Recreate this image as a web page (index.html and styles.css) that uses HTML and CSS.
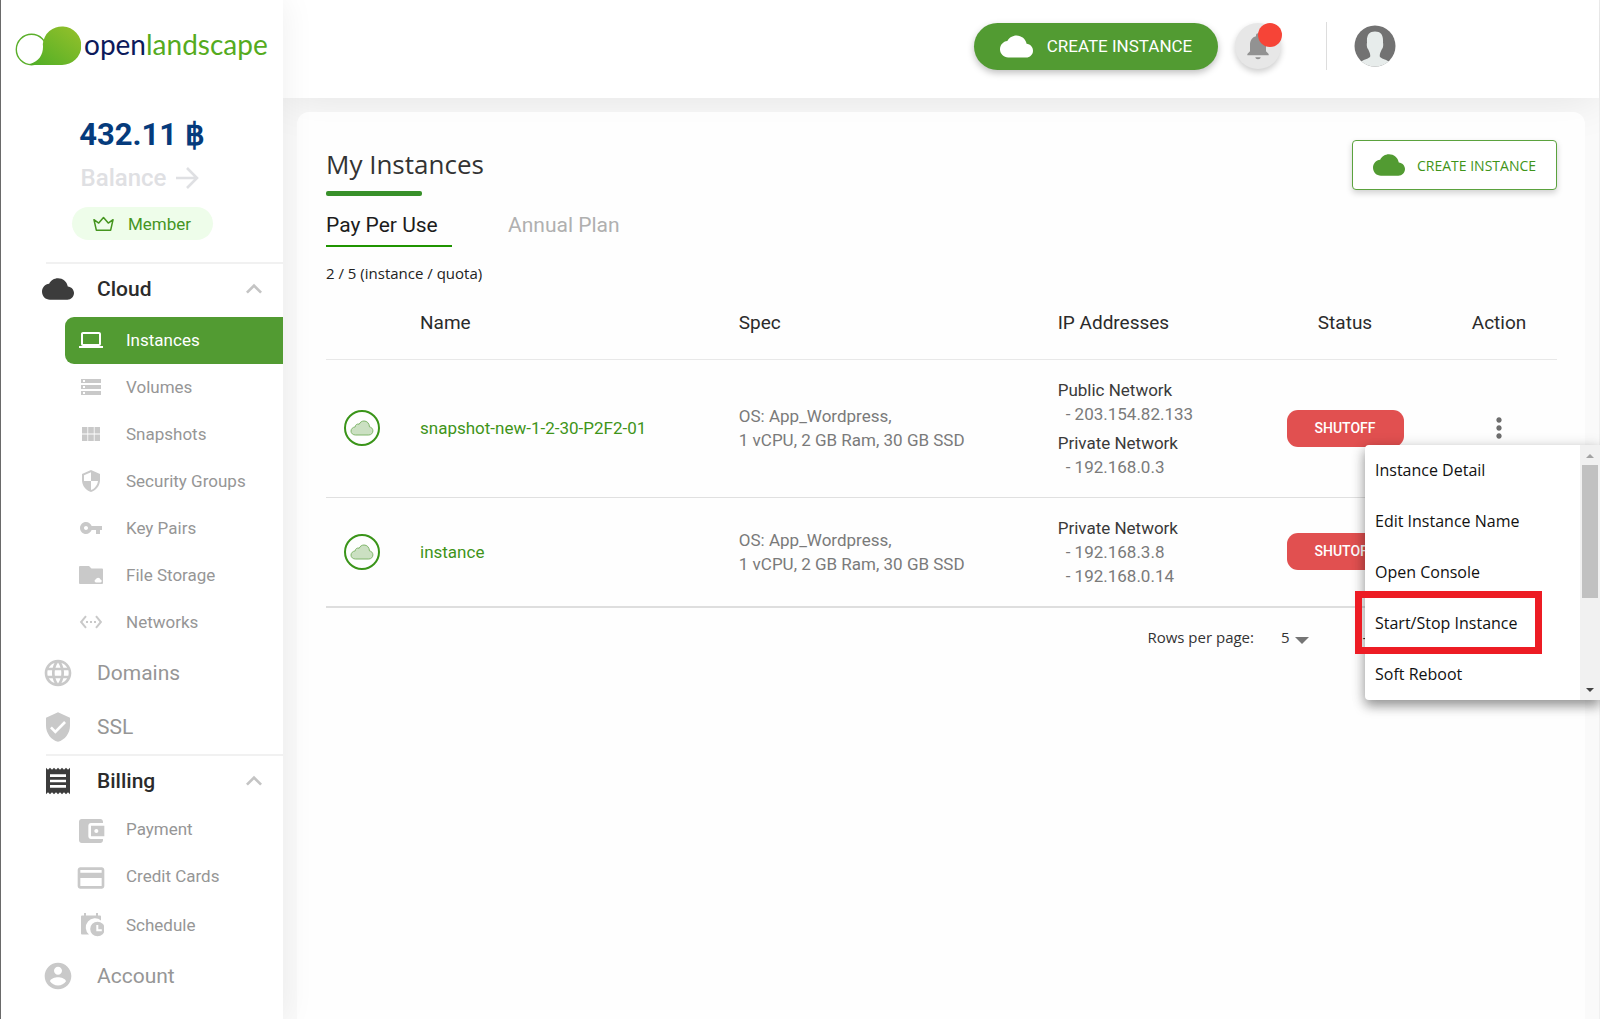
FILE: index.html
```html
<!DOCTYPE html>
<html lang="en">
<head>
<meta charset="utf-8">
<meta name="viewport" content="width=device-width, initial-scale=1">
<title>My Instances - OpenLandscape</title>
<link rel="stylesheet" href="styles.css">
</head>
<body>
<svg class="sprite" aria-hidden="true">
  <symbol id="i-cloud" viewBox="0 4 24 16"><path d="M19.35 10.04C18.67 6.59 15.64 4 12 4 9.11 4 6.6 5.64 5.35 8.04 2.34 8.36 0 10.91 0 14c0 3.31 2.69 6 6 6h13c2.76 0 5-2.24 5-5 0-2.64-2.05-4.78-4.65-4.96z"/></symbol>
  <symbol id="i-up" viewBox="0 0 24 24"><path d="M12 8l-6 6 1.41 1.41L12 10.83l4.59 4.58L18 14z"/></symbol>
  <symbol id="i-cloud-line" viewBox="0 0 24 16"><path d="M5.5 15h13.2c2.5 0 4.2-1.900 4.200-4.200 0-2.200-1.600-3.600-3.400-3.900C19.300 3.300 17 1 14.100 1c-2.300 0-4 1.200-4.900 3.200C7 3.500 5.200 5 5.200 6.900 2.800 7.200 1 8.900 1 11.100 1 13.400 3 15 5.500 15z"/></symbol>
</svg>

<div class="app">
  <aside class="sidebar">
    <a class="logo" href="#" aria-label="openlandscape">
      <svg class="logo-mark" width="66" height="42" viewBox="0 0 66 42" aria-hidden="true">
        <defs><linearGradient id="lg" x1="0" y1="1" x2="1" y2="0"><stop offset="0" stop-color="#4fae26"/><stop offset="1" stop-color="#97c12b"/></linearGradient></defs>
        <circle cx="16.500" cy="24.500" r="15.200" fill="none" stroke="#5aaf2a" stroke-width="1.400"/>
        <path d="M15 40H47A19.300 19.300 0 1 0 27.800 19C29 28 25 36 15 39z" fill="url(#lg)"/>
      </svg>
      <span class="logo-text"><span class="logo-open">open</span>landscape</span>
    </a>

    <section class="wallet">
      <strong class="amount">432.11 ฿</strong>
      <a class="balance" href="#">Balance
        <svg width="24" height="24" viewBox="0 0 24 24" fill="none" stroke="currentColor" stroke-width="2.600" aria-hidden="true"><path d="M1 12H21.500M12 2L22 12 12 22"/></svg>
      </a>
      <span class="member">
        <svg width="21" height="16" viewBox="0 0 22 16" fill="none" stroke="currentColor" stroke-width="1.600" stroke-linejoin="round" aria-hidden="true"><path d="M1 3.500L6 7 11 1.200 16 7 21 3.500 18.500 14.500H3.500z"/></svg>
        Member
      </span>
    </section>

    <nav class="nav">
      <button class="group open" type="button" aria-expanded="true">
        <span class="ico"><svg width="32" height="22"><use href="#i-cloud"/></svg></span>Cloud
        <svg class="chev" width="32" height="32"><use href="#i-up"/></svg>
      </button>
      <a class="sub active" href="#"><span class="ico"><svg width="24" height="24" viewBox="0 0 24 24"><path d="M20 18c1.100 0 1.990-.9 1.990-2L22 6c0-1.100-.9-2-2-2H4c-1.100 0-2 .9-2 2v10c0 1.100.9 2 2 2H0v2h24v-2h-4zM4 6h16v10H4V6z"/></svg></span>Instances</a>
      <a class="sub" href="#"><span class="ico"><svg width="24" height="24" viewBox="0 0 24 24"><path d="M2 20h20v-4H2v4zm2-3h2v2H4v-2zM2 4v4h20V4H2zm4 3H4V5h2v2zm-4 7h20v-4H2v4zm2-3h2v2H4v-2z"/></svg></span>Volumes</a>
      <a class="sub" href="#"><span class="ico"><svg width="24" height="24" viewBox="0 0 24 24"><path d="M3 5h5.400v6.500H3zM9.200 5h5.600v6.500H9.200zM15.600 5H21v6.500h-5.400zM3 12.500h5.400V19H3zM9.200 12.500h5.600V19H9.200zM15.600 12.500H21V19h-5.400z"/></svg></span>Snapshots</a>
      <a class="sub" href="#"><span class="ico"><svg width="24" height="24" viewBox="0 0 24 24"><path d="M12 1L3 5v6c0 5.550 3.840 10.740 9 12 5.160-1.260 9-6.450 9-12V5l-9-4zm0 10.990h7c-.53 4.120-3.280 7.790-7 8.940V12H5V6.300l7-3.110v8.800z"/></svg></span>Security Groups</a>
      <a class="sub" href="#"><span class="ico"><svg width="24" height="24" viewBox="0 0 24 24"><path d="M12.650 10C11.830 7.670 9.610 6 7 6c-3.310 0-6 2.690-6 6s2.690 6 6 6c2.610 0 4.830-1.670 5.650-4H17v4h4v-4h2v-4H12.650zM7 14c-1.100 0-2-.9-2-2s.9-2 2-2 2 .9 2 2-.9 2-2 2z"/></svg></span>Key Pairs</a>
      <a class="sub" href="#"><span class="ico"><svg width="24" height="20" viewBox="0 0 24 20" fill-rule="evenodd"><path d="M1 1h9l2.500 2.500H23a1 1 0 0 1 1 1V18a1 1 0 0 1-1 1H1a1 1 0 0 1-1-1V2a1 1 0 0 1 1-1zM17 17.500h4.500a1.600 1.600 0 0 0 0-3.100 2.500 2.500 0 0 0-4.700-.2A1.700 1.700 0 0 0 17 17.500z"/></svg></span>File Storage</a>
      <a class="sub" href="#"><span class="ico"><svg width="24" height="24" viewBox="0 0 24 24"><path d="M7.770 6.760L6.230 5.480.82 12l5.410 6.520 1.540-1.280L3.420 12l4.350-5.240zM7 13h2v-2H7v2zm10-2h-2v2h2v-2zm-6 2h2v-2h-2v2zm6.770-7.520l-1.540 1.280L20.580 12l-4.350 5.240 1.540 1.280L23.180 12l-5.410-6.520z"/></svg></span>Networks</a>
      <a class="group" href="#"><span class="ico"><svg width="32" height="32" viewBox="0 0 24 24"><path d="M11.990 2C6.470 2 2 6.480 2 12s4.470 10 9.990 10C17.520 22 22 17.520 22 12S17.520 2 11.990 2zm6.930 6h-2.950c-.32-1.250-.78-2.450-1.380-3.560 1.840.63 3.370 1.910 4.330 3.560zM12 4.040c.83 1.200 1.480 2.530 1.910 3.960h-3.820c.43-1.430 1.080-2.760 1.910-3.960zM4.260 14C4.100 13.360 4 12.690 4 12s.1-1.360.26-2h3.380c-.08.660-.14 1.320-.14 2 0 .680.060 1.340.14 2H4.260zm.82 2h2.950c.32 1.250.78 2.450 1.380 3.560-1.840-.63-3.370-1.900-4.330-3.560zm2.950-8H5.080c.96-1.660 2.490-2.930 4.330-3.560C8.810 5.550 8.350 6.750 8.030 8zM12 19.960c-.83-1.200-1.480-2.530-1.910-3.960h3.820c-.43 1.430-1.080 2.760-1.910 3.960zM14.340 14H9.660c-.09-.66-.16-1.320-.16-2 0-.68.070-1.350.16-2h4.680c.09.650.16 1.320.16 2 0 .680-.07 1.340-.16 2zm.25 5.560c.6-1.110 1.060-2.310 1.380-3.560h2.950c-.96 1.650-2.490 2.930-4.330 3.560zM16.360 14c.08-.66.14-1.320.14-2 0-.68-.06-1.340-.14-2h3.380c.16.640.26 1.310.26 2s-.1 1.360-.26 2h-3.380z"/></svg></span>Domains</a>
      <a class="group" href="#"><span class="ico"><svg width="32" height="32" viewBox="0 0 24 24"><path d="M12 1L3 5v6c0 5.550 3.840 10.740 9 12 5.160-1.260 9-6.450 9-12V5l-9-4zm-2 16l-4-4 1.410-1.410L10 14.170l6.590-6.590L18 9l-8 8z"/></svg></span>SSL</a>
    </nav>
    <nav class="nav">
      <button class="group open" type="button" aria-expanded="true">
        <span class="ico"><svg width="32" height="32" viewBox="0 0 24 24"><path d="M18 17H6v-2h12v2zm0-4H6v-2h12v2zm0-4H6V7h12v2zM3 22l1.500-1.500L6 22l1.500-1.500L9 22l1.500-1.500L12 22l1.500-1.500L15 22l1.500-1.500L18 22l1.500-1.500L21 22V2l-1.500 1.500L18 2l-1.500 1.500L15 2l-1.500 1.500L12 2l-1.500 1.500L9 2 7.500 3.500 6 2 4.500 3.500 3 2v20z"/></svg></span>Billing
        <svg class="chev" width="32" height="32"><use href="#i-up"/></svg>
      </button>
      <a class="sub" href="#"><span class="ico low"><svg width="32" height="32" viewBox="0 0 24 24"><path d="M21 18v1c0 1.100-.9 2-2 2H5c-1.110 0-2-.9-2-2V5c0-1.100.89-2 2-2h14c1.100 0 2 .9 2 2v1h-9c-1.110 0-2 .9-2 2v8c0 1.100.89 2 2 2h9zm-9-2h10V8H12v8zm4-2.500c-.83 0-1.500-.67-1.500-1.500s.67-1.500 1.500-1.500 1.500.67 1.500 1.500-.67 1.500-1.500 1.500z"/></svg></span>Payment</a>
      <a class="sub" href="#"><span class="ico low"><svg width="32" height="32" viewBox="0 0 24 24"><path d="M20 4H4c-1.110 0-1.990.89-1.990 2L2 18c0 1.110.89 2 2 2h16c1.110 0 2-.89 2-2V6c0-1.110-.89-2-2-2zm0 14H4v-6h16v6zm0-10H4V6h16v2z"/></svg></span>Credit Cards</a>
      <a class="sub apart" href="#"><span class="ico"><svg width="26" height="24" viewBox="0 0 26 24"><path d="M4 2.500h2V0h2v2.500h10V0h2v2.500h2a1 1 0 0 1 1 1V7.500A9 9 0 0 0 11 21.500H4a1 1 0 0 1-1-1v-17a1 1 0 0 1 1-1z"/><path fill-rule="evenodd" d="M19.500 8.700a7.300 7.300 0 1 0 0 14.600 7.300 7.300 0 0 0 0-14.600zm-1.200 3.300h2v4.200h3.500v2h-5.500z"/></svg></span>Schedule</a>
      <a class="group" href="#"><span class="ico"><svg width="32" height="32" viewBox="0 0 24 24"><path d="M12 2C6.480 2 2 6.480 2 12s4.480 10 10 10 10-4.480 10-10S17.520 2 12 2zm0 3c1.660 0 3 1.340 3 3s-1.340 3-3 3-3-1.340-3-3 1.340-3 3-3zm0 14.200c-2.500 0-4.710-1.280-6-3.220.03-1.990 4-3.080 6-3.080 1.990 0 5.970 1.090 6 3.080-1.290 1.940-3.500 3.220-6 3.220z"/></svg></span>Account</a>
    </nav>
  </aside>

  <div class="page">
    <header class="topbar">
      <button class="create-pill" type="button"><svg width="33" height="23" aria-hidden="true"><use href="#i-cloud"/></svg>CREATE INSTANCE</button>
      <button class="bell" type="button" aria-label="Notifications">
        <svg width="32" height="32" viewBox="0 0 24 24" aria-hidden="true"><path d="M12 22c1.100 0 2-.5 2-1.500h-4c0 1 .9 1.500 2 1.500zm6-6v-5c0-3.070-1.640-5.640-4.500-6.320V4c0-.83-.67-1.500-1.500-1.500s-1.500.67-1.500 1.500v.68C7.630 5.360 6 7.920 6 11v5l-2 2v1h16v-1l-2-2z"/></svg>
        <span class="dot"></span>
      </button>
      <a class="user" href="#" aria-label="Profile">
        <svg width="42" height="42" viewBox="0 0 42 42" aria-hidden="true">
          <circle cx="21" cy="21" r="20.500" fill="#727272"/>
          <path d="M7.500 36.400C10 34.500 15.500 33.500 16.200 31.500 16.500 29.500 15.500 27 14.300 24.500 12.800 23 12.500 20 13 17.500 12.500 10 15 6.500 21 6.500S29.500 10 29 17.500C29.500 20 29.200 23 27.700 24.500 26.500 27 25.500 29.500 25.800 31.500 26.500 33.500 32 34.500 34.500 36.400A20.500 20.500 0 0 1 7.500 36.400z" fill="#e7eceb"/>
        </svg>
      </a>
    </header>

    <main class="card">
      <div class="card-head">
        <h1>My Instances</h1>
        <button class="create-box" type="button"><svg width="32" height="22" aria-hidden="true"><use href="#i-cloud"/></svg>CREATE INSTANCE</button>
      </div>
      <div class="tabs" role="tablist">
        <button class="tab selected" type="button" role="tab" aria-selected="true">Pay Per Use</button>
        <button class="tab" type="button" role="tab" aria-selected="false">Annual Plan</button>
      </div>
      <p class="quota">2 / 5 (instance / quota)</p>

      <table class="instances">
        <colgroup><col class="c-icon"><col class="c-text"><col class="c-text"><col><col class="c-status"><col class="c-action"></colgroup>
        <thead>
          <tr><th></th><th>Name</th><th>Spec</th><th>IP Addresses</th><th class="mid">Status</th><th class="mid">Action</th></tr>
        </thead>
        <tbody>
          <tr>
            <td><span class="badge"><svg width="24" height="16"><use href="#i-cloud-line"/></svg></span></td>
            <td><a href="#">snapshot-new-1-2-30-P2F2-01</a></td>
            <td>OS: App_Wordpress,<br>1 vCPU, 2 GB Ram, 30 GB SSD</td>
            <td>
              <dl><dt>Public Network</dt><dd>- 203.154.82.133</dd></dl>
              <dl><dt>Private Network</dt><dd>- 192.168.0.3</dd></dl>
            </td>
            <td class="mid"><span class="status">SHUTOFF</span></td>
            <td class="mid">
              <div class="actions">
                <button class="kebab" type="button" aria-label="Actions" aria-haspopup="menu">
                  <svg width="32" height="32" viewBox="0 0 24 24"><path d="M12 8c1.100 0 2-.9 2-2s-.9-2-2-2-2 .9-2 2 .9 2 2 2zm0 2c-1.100 0-2 .9-2 2s.9 2 2 2 2-.9 2-2-.9-2-2-2zm0 6c-1.100 0-2 .9-2 2s.9 2 2 2 2-.9 2-2-.9-2-2-2z"/></svg>
                </button>
                <div class="menu">
                  <div class="menu-items" role="menu">
                    <button type="button" role="menuitem">Instance Detail</button>
                    <button type="button" role="menuitem">Edit Instance Name</button>
                    <button type="button" role="menuitem">Open Console</button>
                    <button class="marked" type="button" role="menuitem">Start/Stop Instance</button>
                    <button type="button" role="menuitem">Soft Reboot</button>
                  </div>
                  <div class="scroll" aria-hidden="true">
                    <span class="arrow up"></span><span class="thumb"></span><span class="arrow down"></span>
                  </div>
                </div>
              </div>
            </td>
          </tr>
          <tr>
            <td><span class="badge"><svg width="24" height="16"><use href="#i-cloud-line"/></svg></span></td>
            <td><a href="#">instance</a></td>
            <td>OS: App_Wordpress,<br>1 vCPU, 2 GB Ram, 30 GB SSD</td>
            <td>
              <dl><dt>Private Network</dt><dd>- 192.168.3.8</dd><dd>- 192.168.0.14</dd></dl>
            </td>
            <td class="mid"><span class="status">SHUTOFF</span></td>
            <td></td>
          </tr>
        </tbody>
      </table>

      <div class="pager">
        <label for="rows">Rows per page:</label>
        <span class="picker"><select id="rows"><option>5</option></select></span>
        <span class="range">1-2 of 2</span>
      </div>
    </main>
  </div>
</div>
</body>
</html>
```

FILE: styles.css
```css
:root {
  --green: #529b32;
  --green-text: #3f9419;
  --grey-text: #969696;
  --grey-icon: #c9c9c9;
  --ui: Roboto, "Liberation Sans", sans-serif;
  --brand: "Open Sans", "Noto Sans", sans-serif;
}

*, *::before, *::after { box-sizing: border-box; }

body {
  margin: 0;
  font-family: var(--ui);
  color: #333;
  background: #fafafa;
}

button {
  font: inherit;
  color: inherit;
  background: none;
  border: 0;
  padding: 0;
  cursor: pointer;
}

a { color: inherit; text-decoration: none; }
svg { display: block; fill: currentColor; flex: none; }
svg[fill="none"] { fill: none; }
.sprite { position: absolute; width: 0; height: 0; }

.app { display: flex; min-height: 100vh; }

/* Sidebar */
.sidebar {
  position: relative;
  z-index: 1;
  flex: none;
  width: 283px;
  background: #fff;
  border-left: 1px solid #6a6a6a;
  box-shadow: 0 0 32px rgba(0, 0, 0, .07);
}

.logo {
  display: flex;
  align-items: center;
  gap: 3px;
  height: 98px;
  padding: 0 0 6px 14px;
}
.logo-text { padding-bottom: 4px; font-family: Lato, sans-serif; font-size: 28px; line-height: 32px; color: #55ab1e; }
.logo-open { color: #0c1a5b; }

.wallet {
  display: flex;
  flex-direction: column;
  align-items: center;
  padding: 17px 0 22px;
}
.amount { font-size: 31px; line-height: 40px; color: #053b7c; }
.balance {
  display: flex;
  align-items: center;
  gap: 9px;
  margin: 3px 4px 0 0;
  font-size: 24px;
  font-weight: 500;
  line-height: 40px;
  color: #dfe0e3;
}
.member {
  display: flex;
  align-items: center;
  justify-content: center;
  gap: 14px;
  width: 141px;
  height: 33px;
  margin-top: 9px;
  border-radius: 17px;
  font-size: 17px;
  color: #45951f;
  background: #eefdea;
}

.nav::before {
  content: "";
  display: block;
  height: 2px;
  margin-left: 45px;
  background: #f1f1f1;
}
.group, .sub {
  display: flex;
  align-items: center;
  color: var(--grey-text);
}
.group { width: 100%; height: 54px; padding-left: 37px; font-size: 21px; text-align: left; }
.group .ico { width: 40px; margin-right: 19px; }
.sub { height: 47px; margin-left: 64px; padding: 0 0 2px 6px; font-size: 17px; }
.sub .ico { width: 40px; margin-right: 15px; }
.ico { display: flex; justify-content: center; flex: none; color: var(--grey-icon); }
.low { padding-top: 4px; }
.apart { margin-top: 2px; }
.open { height: 50px; font-weight: 500; color: #2b2b2b; }
.open .ico { color: #3c3c3c; }
.chev { margin: 0 13px 0 auto; color: #c4c4c4; }
.active { margin-top: 3px; color: #fff; background: var(--green); border-radius: 9px 0 0 9px; }
.active .ico { color: #fff; }

/* Page */
.page { flex: 1; min-width: 0; display: flex; flex-direction: column; border-right: 1px solid #f0f0f0; }

.topbar {
  display: flex;
  align-items: center;
  justify-content: flex-end;
  height: 98px;
  padding: 0 203px 6px 0;
  background: #fff;
  box-shadow: 0 0 48px rgba(0, 0, 0, .1);
}
.create-pill {
  display: flex;
  align-items: center;
  justify-content: center;
  gap: 14px;
  width: 244px;
  height: 47px;
  border-radius: 24px;
  font-size: 17px;
  color: #fff;
  background: var(--green);
  box-shadow: 0 3px 7px rgba(0, 0, 0, .25);
}
.bell {
  position: relative;
  display: flex;
  align-items: center;
  justify-content: center;
  width: 46px;
  height: 46px;
  margin-left: 17px;
  border-radius: 50%;
  color: #929292;
  background: #e7e7e7;
  box-shadow: 0 3px 6px rgba(0, 0, 0, .2);
}
.dot {
  position: absolute;
  top: 0;
  right: -1px;
  width: 24px;
  height: 24px;
  border-radius: 50%;
  background: #f64437;
}
.user {
  display: flex;
  align-items: center;
  height: 48px;
  margin-left: 45px;
  padding-left: 27px;
  border-left: 1px solid #ddd;
}

.card {
  flex: 1;
  margin: 14px 14px 0;
  padding: 28px 28px 0 29px;
  border-radius: 12px 12px 0 0;
  background: rgba(255, 255, 255, .8);
}
.card-head { display: flex; justify-content: space-between; align-items: flex-start; height: 69px; }
h1 {
  margin: 0;
  padding-top: 4px;
  font-family: var(--brand);
  font-size: 26px;
  font-weight: 400;
  line-height: 40px;
}
h1::after {
  content: "";
  display: block;
  width: 96px;
  height: 5px;
  margin-top: 7px;
  border-radius: 2px;
  background: #38902a;
}
.create-box {
  display: flex;
  align-items: center;
  justify-content: center;
  gap: 12px;
  width: 205px;
  height: 50px;
  border: 1px solid #5ba23e;
  border-radius: 4px;
  font-family: var(--brand);
  font-size: 14px;
  color: var(--green-text);
  background: #fff;
  box-shadow: 0 3px 6px rgba(0, 0, 0, .18);
}
.create-box svg { color: var(--green); }

.tabs { display: flex; gap: 56px; }
.tab { height: 38px; padding-bottom: 4px; font-size: 21px; color: #b0b0b0; border-bottom: 2px solid transparent; }
.selected { width: 126px; text-align: left; color: #1c1c1c; border-color: #1f9400; }
.quota { margin: 16px 0 0; font-family: var(--brand); font-size: 15px; line-height: 20px; color: #222; }

.instances {
  width: 100%;
  margin-top: 7px;
  table-layout: fixed;
  border-collapse: collapse;
  border-bottom: 2px solid #dedede;
}
.c-icon { width: 94px; }
.c-text { width: 25.9%; }
.c-status { width: 192px; }
.c-action { width: 116px; }
th {
  height: 69px;
  padding: 0 0 4px;
  border-bottom: 1px solid #e8e8e8;
  text-align: left;
  font-size: 19px;
  font-weight: 400;
  color: #2b2b2b;
}
td { padding: 18px 0; font-size: 17px; line-height: 24px; color: #7a7a7a; }
tbody tr + tr td { border-top: 1px solid #e0e0e0; }
td a { color: var(--green-text); }
.instances .mid { text-align: center; }
dl { margin: 0; }
dl + dl { margin-top: 5px; }
dt { color: #3a3a3a; }
dd { margin: 0 0 0 8px; }
.badge {
  display: flex;
  align-items: center;
  justify-content: center;
  width: 36px;
  height: 36px;
  margin-left: 18px;
  border: 2px solid #3a9419;
  border-radius: 50%;
}
.badge svg { fill: #cbe0c2; stroke: #7fb56a; stroke-width: 1px; }
.status {
  display: inline-block;
  width: 117px;
  height: 37px;
  border-radius: 11px;
  font-size: 14px;
  font-weight: 500;
  line-height: 36px;
  color: #fff;
  background: #e15050;
  vertical-align: middle;
}

/* Row actions and their menu */
.actions { position: relative; }
.kebab { display: inline-flex; padding: 1px 0; vertical-align: middle; color: #6e6e6e; }
.menu {
  position: absolute;
  top: 100%;
  right: -43px;
  display: flex;
  width: 235px;
  border-radius: 4px 0 0 4px;
  background: #fff;
  box-shadow: 0 6px 12px rgba(0, 0, 0, .35), 0 2px 16px rgba(0, 0, 0, .14);
}
.menu-items { flex: 1; display: flex; flex-direction: column; }
.menu-items button {
  height: 51px;
  padding: 0 0 2px 10px;
  text-align: left;
  font-family: var(--brand);
  font-size: 16px;
  color: #111;
}
.marked { position: relative; }
.marked::after {
  content: "";
  position: absolute;
  top: -7px;
  left: -10px;
  width: 187px;
  height: 63px;
  border: 7px solid #ed1c24;
}
.scroll {
  display: flex;
  flex-direction: column;
  align-items: center;
  width: 20px;
  padding: 9px 0 8px;
  background: #f1f1f1;
}
.arrow { border: 4px solid transparent; border-top-width: 0; border-bottom: 4px solid #a3a3a3; }
.down { margin-top: auto; border-top: 4px solid #444; border-bottom-width: 0; }
.thumb { width: 16px; height: 133px; margin-top: 7px; background: #c1c1c1; }

.pager {
  display: flex;
  align-items: center;
  justify-content: flex-end;
  padding: 15px 143px 0 0;
  font-family: var(--brand);
  font-size: 15px;
  line-height: 28px;
  color: #333;
}
.picker { display: flex; align-items: center; margin-left: 27px; }
.picker::after {
  content: "";
  margin: 7px 0 0 5px;
  border: 7px solid transparent;
  border-top-color: #757575;
  border-bottom-width: 0;
}
select { appearance: none; border: 0; padding: 0; background: none; font: inherit; color: inherit; }
.range { width: 60px; margin-left: 45px; white-space: nowrap; }
```
